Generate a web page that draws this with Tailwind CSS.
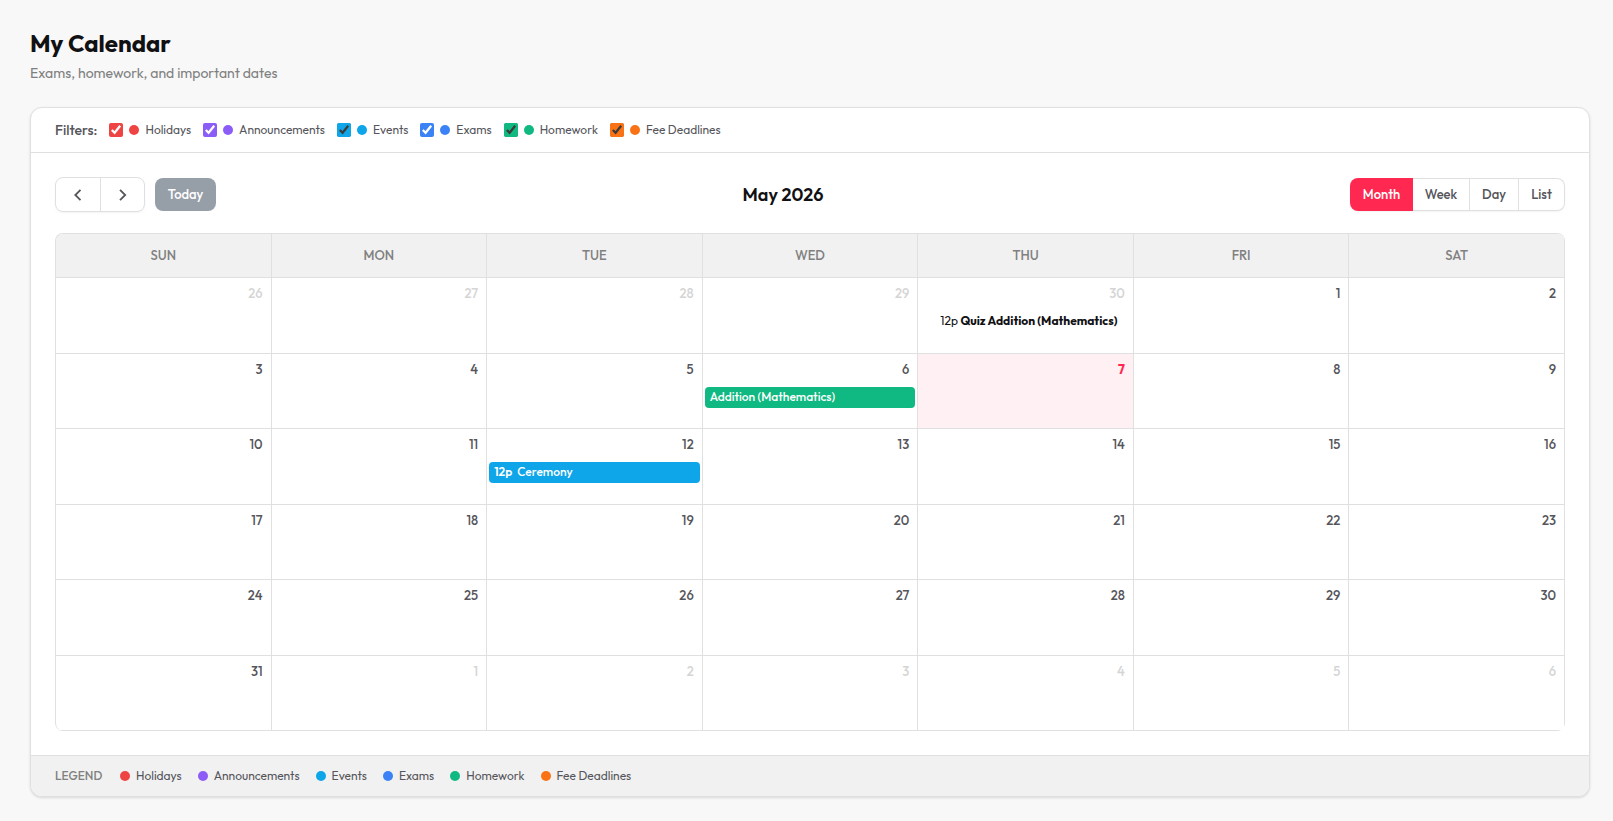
<!DOCTYPE html>
<html lang="en">
<head>
    <meta charset="UTF-8">
    <meta name="viewport" content="width=device-width, initial-scale=1.0">
    <title>My Calendar</title>
    <script src="https://cdn.jsdelivr.net/npm/@tailwindcss/browser@4"></script>
</head>
<body class="min-h-screen bg-[#f8f8f8] pt-[27px] pr-[23px] pb-6 pl-[30px] font-[Outfit,Lato,sans-serif] text-[#55555b]">
    <!-- Page header -->
    <header class="mb-6">
        <h1 class="text-2xl leading-8 font-bold text-[#111114]">My Calendar</h1>
        <p class="mt-1 text-sm leading-5 text-[#808080]">Exams, homework, and important dates</p>
    </header>

    <main class="overflow-hidden rounded-xl border border-[#e0e0e0] bg-white shadow-sm">
        <!-- Filters -->
        <div class="flex flex-wrap items-center gap-3 border-b border-[#e0e0e0] px-6 py-3 text-xs leading-5">
            <span class="text-sm leading-5 font-medium">Filters:</span>
            <label class="flex items-center gap-1.5">
                <input type="checkbox" checked class="size-3.5 accent-[#ef4444]">
                <span class="size-2.5 rounded-full bg-[#ef4444]"></span>
                Holidays
            </label>
            <label class="flex items-center gap-1.5">
                <input type="checkbox" checked class="size-3.5 accent-[#8b5cf6]">
                <span class="size-2.5 rounded-full bg-[#8b5cf6]"></span>
                Announcements
            </label>
            <label class="flex items-center gap-1.5">
                <input type="checkbox" checked class="size-3.5 accent-[#0ea5e9]">
                <span class="size-2.5 rounded-full bg-[#0ea5e9]"></span>
                Events
            </label>
            <label class="flex items-center gap-1.5">
                <input type="checkbox" checked class="size-3.5 accent-[#3b82f6]">
                <span class="size-2.5 rounded-full bg-[#3b82f6]"></span>
                Exams
            </label>
            <label class="flex items-center gap-1.5">
                <input type="checkbox" checked class="size-3.5 accent-[#10b981]">
                <span class="size-2.5 rounded-full bg-[#10b981]"></span>
                Homework
            </label>
            <label class="flex items-center gap-1.5">
                <input type="checkbox" checked class="size-3.5 accent-[#f97316]">
                <span class="size-2.5 rounded-full bg-[#f97316]"></span>
                Fee Deadlines
            </label>
        </div>

        <div class="p-6">
            <!-- Toolbar -->
            <div class="mb-[21px] flex items-center justify-between">
                <div class="flex items-center gap-2.5">
                    <div class="flex rounded-lg border border-[#e0e0e0] shadow-xs">
                        <button aria-label="Previous month" class="flex h-[33px] w-[45px] items-center justify-center border-r border-[#e0e0e0]">
                            <svg class="h-3 w-2" viewBox="0 0 8 12" fill="none" stroke="currentColor" stroke-width="1.8"><path d="M6.5.8 1.3 6l5.2 5.2"/></svg>
                        </button>
                        <button aria-label="Next month" class="flex h-[33px] w-[43px] items-center justify-center">
                            <svg class="h-3 w-2" viewBox="0 0 8 12" fill="none" stroke="currentColor" stroke-width="1.8"><path d="M1 .8 6.2 6 1 11.2"/></svg>
                        </button>
                    </div>
                    <button class="h-[33px] w-[61px] rounded-lg bg-[#969ea7] pb-0.5 text-[13px] leading-5 font-medium text-white">Today</button>
                </div>
                <h2 class="text-lg font-semibold text-[#111114]">May 2026</h2>
                <div class="flex h-[33px] rounded-lg text-[13px] leading-5 font-medium shadow-xs [&>button]:pb-0.5">
                    <button class="w-[63px] rounded-l-lg bg-[#ff2850] text-white">Month</button>
                    <button class="w-[57px] border-y border-r border-[#e0e0e0]">Week</button>
                    <button class="w-[49px] border-y border-r border-[#e0e0e0]">Day</button>
                    <button class="w-[46px] rounded-r-lg border-y border-r border-[#e0e0e0]">List</button>
                </div>
            </div>

            <!-- Month grid -->
            <div class="overflow-hidden rounded-lg border-t border-l border-[#e0e0e0]">
                <table class="w-full table-fixed border-separate border-spacing-0 text-[13px] leading-5 [&_td]:border-r [&_td]:border-b [&_td]:border-[#e0e0e0] [&_td]:p-0 [&_td]:align-top [&_th]:border-r [&_th]:border-b [&_th]:border-[#e0e0e0] [&_th]:pb-0.5 [&_time]:block [&_time]:h-[33px] [&_time]:px-2 [&_time]:pt-[5px] [&_time]:text-right">
                    <thead class="bg-[#f1f1f1] text-[#808080]">
                        <tr class="h-11">
                            <th class="font-medium">SUN</th>
                            <th class="font-medium">MON</th>
                            <th class="font-medium">TUE</th>
                            <th class="font-medium">WED</th>
                            <th class="font-medium">THU</th>
                            <th class="font-medium">FRI</th>
                            <th class="font-medium">SAT</th>
                        </tr>
                    </thead>
                    <tbody class="font-medium [&>tr:nth-child(even)]:h-[75px] [&>tr:nth-child(odd)]:h-[76px]">
                        <tr>
                            <td><time class="text-[#d5d5d5]">26</time></td>
                            <td><time class="text-[#d5d5d5]">27</time></td>
                            <td><time class="text-[#d5d5d5]">28</time></td>
                            <td><time class="text-[#d5d5d5]">29</time></td>
                            <td>
                                <time class="text-[#d5d5d5]">30</time>
                                <a href="#" class="block truncate pl-[22px] text-xs leading-5 font-normal text-[#111114]">12p <b class="font-bold">Quiz Addition (Mathematics)</b></a>
                            </td>
                            <td><time>1</time></td>
                            <td><time>2</time></td>
                        </tr>
                        <tr>
                            <td><time>3</time></td>
                            <td><time>4</time></td>
                            <td><time>5</time></td>
                            <td>
                                <time>6</time>
                                <a href="#" class="mx-0.5 block h-[21px] truncate rounded-sm bg-[#10b981] px-[5px] text-xs leading-5 text-white">Addition (Mathematics)</a>
                            </td>
                            <td class="bg-[#fff0f3]"><time class="font-bold text-[#ff2850]">7</time></td>
                            <td><time>8</time></td>
                            <td><time>9</time></td>
                        </tr>
                        <tr>
                            <td><time>10</time></td>
                            <td><time>11</time></td>
                            <td>
                                <time>12</time>
                                <a href="#" class="mx-0.5 flex h-[21px] gap-[5px] rounded-sm bg-[#0ea5e9] px-[5px] text-xs leading-5 text-white"><b class="font-semibold">12p</b> Ceremony</a>
                            </td>
                            <td><time>13</time></td>
                            <td><time>14</time></td>
                            <td><time>15</time></td>
                            <td><time>16</time></td>
                        </tr>
                        <tr>
                            <td><time>17</time></td>
                            <td><time>18</time></td>
                            <td><time>19</time></td>
                            <td><time>20</time></td>
                            <td><time>21</time></td>
                            <td><time>22</time></td>
                            <td><time>23</time></td>
                        </tr>
                        <tr>
                            <td><time>24</time></td>
                            <td><time>25</time></td>
                            <td><time>26</time></td>
                            <td><time>27</time></td>
                            <td><time>28</time></td>
                            <td><time>29</time></td>
                            <td><time>30</time></td>
                        </tr>
                        <tr>
                            <td><time>31</time></td>
                            <td><time class="text-[#d5d5d5]">1</time></td>
                            <td><time class="text-[#d5d5d5]">2</time></td>
                            <td><time class="text-[#d5d5d5]">3</time></td>
                            <td><time class="text-[#d5d5d5]">4</time></td>
                            <td><time class="text-[#d5d5d5]">5</time></td>
                            <td><time class="text-[#d5d5d5]">6</time></td>
                        </tr>
                    </tbody>
                </table>
            </div>
        </div>

        <!-- Legend -->
        <footer class="flex flex-wrap items-center gap-4 border-t border-[#e0e0e0] bg-[#f1f1f1] px-6 py-2.5 text-xs leading-5">
            <span class="w-[49px] font-medium text-[#808080]">LEGEND</span>
            <span class="flex items-center gap-1.5"><span class="size-2.5 rounded-full bg-[#ef4444]"></span>Holidays</span>
            <span class="flex items-center gap-1.5"><span class="size-2.5 rounded-full bg-[#8b5cf6]"></span>Announcements</span>
            <span class="flex items-center gap-1.5"><span class="size-2.5 rounded-full bg-[#0ea5e9]"></span>Events</span>
            <span class="flex items-center gap-1.5"><span class="size-2.5 rounded-full bg-[#3b82f6]"></span>Exams</span>
            <span class="flex items-center gap-1.5"><span class="size-2.5 rounded-full bg-[#10b981]"></span>Homework</span>
            <span class="flex items-center gap-1.5"><span class="size-2.5 rounded-full bg-[#f97316]"></span>Fee Deadlines</span>
        </footer>
    </main>
</body>
</html>
